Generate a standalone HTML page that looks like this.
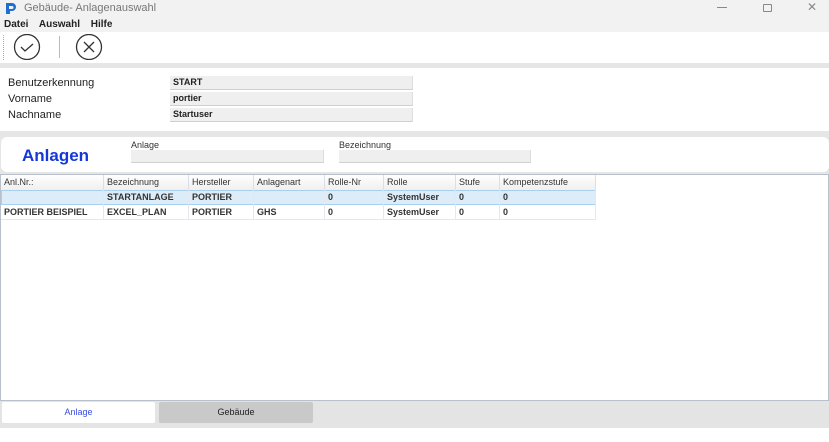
<!DOCTYPE html>
<html><head><meta charset="utf-8"><style>
*{margin:0;padding:0;box-sizing:border-box}
body{width:829px;height:442px;background:#fff;position:relative;overflow:hidden;font-family:"Liberation Sans","DejaVu Sans",sans-serif;color:#222}
.a{position:absolute}
.lbl{font-size:11px;color:#222}
.inp{background:#efefef;border-bottom:1px solid #d0d0d0;border-right:1px solid #ddd;font-size:9px;font-weight:bold;padding-left:3px;line-height:13px}
.hc{position:absolute;top:0;height:15px;font-size:9px;padding-left:3px;line-height:15px;border-right:1px solid #dde;color:#333}
.c{position:absolute;height:15px;font-size:9px;font-weight:bold;padding-left:3px;line-height:15px;border-right:1px solid #e6e6ee;color:#333}
</style></head><body>
<div class="a" style="left:0;top:0;width:829px;height:32px;background:#f2f2f2"></div>
<svg class="a" style="left:5px;top:2px" width="12" height="12" viewBox="0 0 12 12"><path d="M1 1h6a4 4 0 0 1 0 8H5v3H1z" fill="#1e6fd0"/><path d="M4 4h3a1.5 1.5 0 0 1 0 3H4z" fill="#f2f2f2"/></svg>
<div class="a" style="left:24px;top:2px;font-size:11px;color:#777">Gebäude- Anlagenauswahl</div>
<div class="a" style="left:717px;top:7px;width:10px;height:1px;background:#888"></div>
<div class="a" style="left:763px;top:4px;width:9px;height:8px;border:1px solid #888;border-radius:1px"></div>
<div class="a" style="left:807px;top:0px;font-size:12px;color:#888">✕</div>
<div class="a" style="left:4px;top:19px;font-size:10px;font-weight:bold;color:#222;word-spacing:8px">Datei Auswahl Hilfe</div>
<div class="a" style="left:0;top:32px;width:829px;height:31px;background:#fff"></div>
<div class="a" style="left:3px;top:35px;height:25px;border-left:1px dotted #aaa"></div>
<svg class="a" style="left:13px;top:34px" width="30" height="26"><circle cx="14" cy="13" r="12.5" fill="none" stroke="#333" stroke-width="1.3"/><path d="M8 13l4 4 8-7" fill="none" stroke="#333" stroke-width="1.3"/></svg>
<div class="a" style="left:59px;top:36px;width:1px;height:22px;background:#bbb"></div>
<svg class="a" style="left:75px;top:34px" width="30" height="26"><circle cx="14" cy="13" r="12.5" fill="none" stroke="#333" stroke-width="1.3"/><path d="M9 8l10 10M19 8L9 18" fill="none" stroke="#333" stroke-width="1.3"/></svg>
<div class="a" style="left:0;top:63px;width:829px;height:5px;background:#e6e6e6"></div>
<div class="a lbl" style="left:8px;top:77px">Benutzerkennung</div>
<div class="a lbl" style="left:8px;top:93px">Vorname</div>
<div class="a lbl" style="left:8px;top:109px">Nachname</div>
<div class="a inp" style="left:170px;top:76px;width:243px;height:14px">START</div>
<div class="a inp" style="left:170px;top:92px;width:243px;height:14px">portier</div>
<div class="a inp" style="left:170px;top:108px;width:243px;height:14px">Startuser</div>
<div class="a" style="left:0;top:131px;width:829px;height:43px;background:#e6e6e6"></div>
<div class="a" style="left:1px;top:137px;width:828px;height:35px;background:#fff;border-radius:6px"></div>
<div class="a" style="left:22px;top:146px;font-size:17px;font-weight:bold;color:#1538d8">Anlagen</div>
<div class="a" style="left:131px;top:140px;font-size:9px;color:#333">Anlage</div>
<div class="a inp" style="left:131px;top:150px;width:193px;height:13px"></div>
<div class="a" style="left:339px;top:140px;font-size:9px;color:#333">Bezeichnung</div>
<div class="a inp" style="left:339px;top:150px;width:192px;height:13px"></div>
<div class="a" style="left:0;top:174px;width:829px;height:227px;background:#fff;border:1px solid #b8c0cc"></div>
<div class="a" style="left:1px;top:175px;width:595px;height:15px;background:linear-gradient(#fff,#f0f0f0)">
<div class="hc" style="left:0;width:103px">Anl.Nr.:</div>
<div class="hc" style="left:103px;width:85px">Bezeichnung</div>
<div class="hc" style="left:188px;width:65px">Hersteller</div>
<div class="hc" style="left:253px;width:71px">Anlagenart</div>
<div class="hc" style="left:324px;width:59px">Rolle-Nr</div>
<div class="hc" style="left:383px;width:72px">Rolle</div>
<div class="hc" style="left:455px;width:44px">Stufe</div>
<div class="hc" style="left:499px;width:96px">Kompetenzstufe</div>
</div>
<div class="a" style="left:1px;top:190px;width:595px;height:15px;background:#dcecf8;border:1px solid #a8d0ee"></div>
<div class="a" style="left:1px;top:190px;width:595px;height:15px">
<div class="c" style="left:0;width:103px"></div><div class="c" style="left:103px;width:85px">STARTANLAGE</div><div class="c" style="left:188px;width:65px">PORTIER</div><div class="c" style="left:253px;width:71px"></div><div class="c" style="left:324px;width:59px">0</div><div class="c" style="left:383px;width:72px">SystemUser</div><div class="c" style="left:455px;width:44px">0</div><div class="c" style="left:499px;width:96px">0</div>
</div>
<div class="a" style="left:1px;top:205px;width:595px;height:15px;border-bottom:1px solid #e6e6ee">
<div class="c" style="left:0;width:103px">PORTIER BEISPIEL</div><div class="c" style="left:103px;width:85px">EXCEL_PLAN</div><div class="c" style="left:188px;width:65px">PORTIER</div><div class="c" style="left:253px;width:71px">GHS</div><div class="c" style="left:324px;width:59px">0</div><div class="c" style="left:383px;width:72px">SystemUser</div><div class="c" style="left:455px;width:44px">0</div><div class="c" style="left:499px;width:96px">0</div>
</div>
<div class="a" style="left:0;top:401px;width:829px;height:27px;background:#e4e4e4"></div>
<div class="a" style="left:2px;top:402px;width:153px;height:21px;background:#fff;border-radius:2px;font-size:9px;color:#3a4fe0;text-align:center;line-height:21px">Anlage</div>
<div class="a" style="left:159px;top:402px;width:154px;height:21px;background:#c9c9c9;border-radius:2px;font-size:9px;color:#222;text-align:center;line-height:21px">Gebäude</div>
</body></html>
